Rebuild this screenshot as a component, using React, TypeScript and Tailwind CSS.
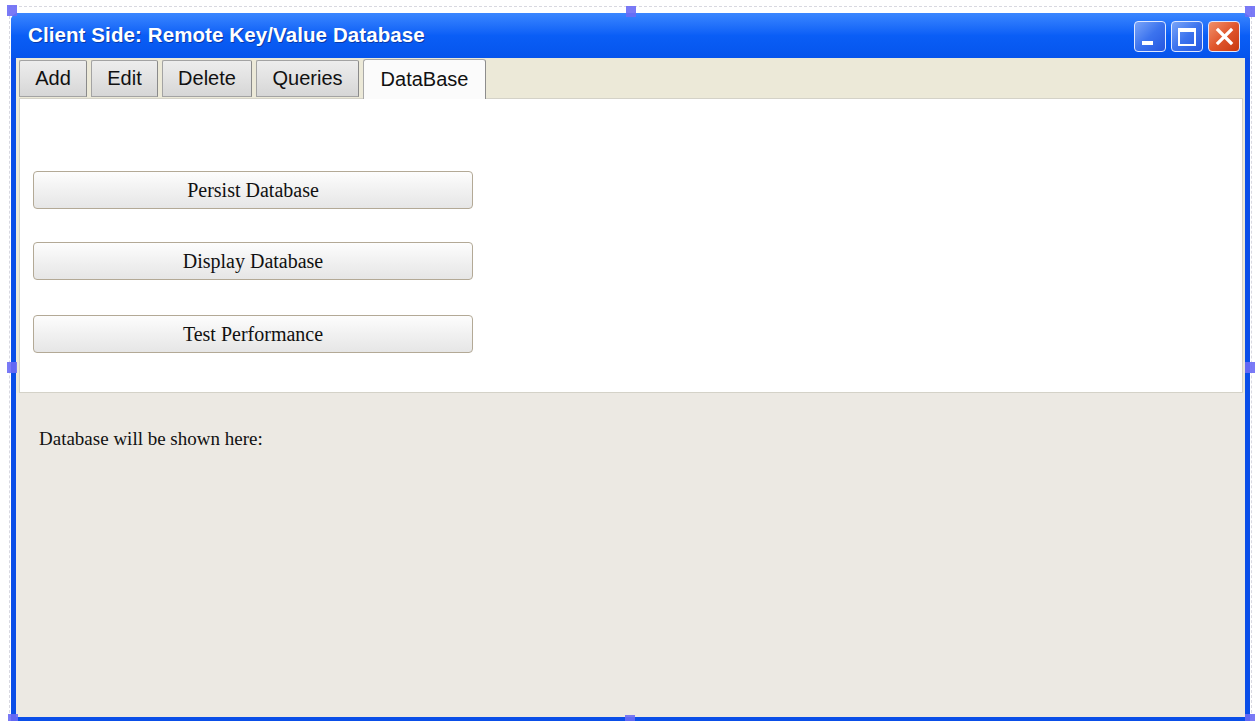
import React from "react";

const tabs = ["Add", "Edit", "Delete", "Queries", "DataBase"];
const tabWidths: Record<string, string> = {
  Add: "w-[68px]",
  Edit: "w-[67px]",
  Delete: "w-[90px]",
  Queries: "w-[103px]",
  DataBase: "w-[123px]",
};

function Handle({ className }: { className: string }) {
  return <div className={`absolute h-[11px] w-[10px] bg-[#6b6bf5] opacity-90 ${className}`} />;
}

function CaptionButton({ kind }: { kind: "min" | "max" | "close" }) {
  const bg =
    kind === "close"
      ? "bg-gradient-to-br from-[#f0906a] via-[#e0562c] to-[#c8380c]"
      : "bg-gradient-to-br from-[#7aa4f8] via-[#3c73ee] to-[#2657e0]";
  return (
    <div className={`relative h-[31px] w-[32px] rounded-[4px] border border-[#dfe8ff] ${bg}`}>
      {kind === "min" && <div className="absolute bottom-[6px] left-[7px] h-[4px] w-[11px] bg-white" />}
      {kind === "max" && (
        <div className="absolute left-[6px] top-[6px] h-[18px] w-[18px] border-2 border-t-[4px] border-white" />
      )}
      {kind === "close" && (
        <svg className="absolute left-[6px] top-[5px]" width="19" height="19" viewBox="0 0 19 19">
          <path d="M3 3 L16 16 M16 3 L3 16" stroke="white" strokeWidth="3.2" strokeLinecap="square" />
        </svg>
      )}
    </div>
  );
}

function ActionButton({ label, className }: { label: string; className: string }) {
  return (
    <button
      className={`flex h-[38px] w-[440px] items-center justify-center rounded-[4px] border border-[#b3a996] bg-gradient-to-b from-[#fdfdfd] via-[#f1f1f1] to-[#e6e6e6] text-[20px] text-[#111] ${className}`}
      style={{ fontFamily: '"Liberation Serif", "Times New Roman", serif' }}
    >
      {label}
    </button>
  );
}

export default function App() {
  return (
    <div className="relative h-[721px] w-[1260px] overflow-hidden bg-white">
      {/* designer selection outline */}
      <div className="absolute left-[9px] top-[6px] h-[712px] w-[1243px] border border-dashed border-[#d8d8e0]" />

      <div className="relative ml-[11px] pt-[13px]">
        <div className="flex h-[708px] w-[1239px] flex-col rounded-t-[8px] bg-[#0a4ee8]">
          {/* title bar */}
          <div className="flex h-[45px] items-center justify-between rounded-t-[8px] bg-gradient-to-b from-[#3a86ff] via-[#0a5ef6] to-[#0654ec] pl-[17px] pr-[10px]">
            <span
              className="text-[20.5px] font-bold tracking-[0.1px] text-white [text-shadow:1px_1px_0_#0a3aa8]"
              style={{ fontFamily: '"Liberation Sans", Arial, sans-serif' }}
            >
              Client Side: Remote Key/Value Database
            </span>
            <div className="flex gap-[5px] pt-[1px]">
              <CaptionButton kind="min" />
              <CaptionButton kind="max" />
              <CaptionButton kind="close" />
            </div>
          </div>

          {/* client area */}
          <div className="mx-[5px] flex flex-1 flex-col bg-[#ece9d8]">
            <div
              className="flex h-[40px] items-end gap-[4px] pl-[3px]"
              style={{ fontFamily: '"Liberation Sans", Arial, sans-serif' }}
            >
              {tabs.map((t) =>
                t === "DataBase" ? (
                  <div
                    key={t}
                    className={`relative z-10 -mb-px flex h-[40px] items-center justify-center rounded-t-[3px] border border-b-0 border-[#a9a9a9] border-r-[#8d8d8d] bg-[#fbfbfb] pb-[2px] text-[20px] text-[#111] ${tabWidths[t]}`}
                  >
                    {t}
                  </div>
                ) : (
                  <div
                    key={t}
                    className={`mb-px flex h-[37px] items-center justify-center rounded-t-[2px] border border-[#a3a3a3] border-r-[#8a8a8a] bg-gradient-to-b from-[#ededed] via-[#e2e2e2] to-[#d6d6d6] pb-[2px] text-[20px] text-[#111] ${tabWidths[t]}`}
                  >
                    {t}
                  </div>
                )
              )}
            </div>

            <div className="ml-[3px] mr-[2px] flex h-[295px] flex-col border border-[#d4d2c8] bg-white pl-[13px]">
              <ActionButton label="Persist Database" className="mt-[72px]" />
              <ActionButton label="Display Database" className="mt-[33px]" />
              <ActionButton label="Test Performance" className="mt-[35px]" />
            </div>

            <div className="flex-1 bg-[#ece9e3] pl-[23px] pt-[32px]">
              <p
                className="text-[19px] text-[#111]"
                style={{ fontFamily: '"Liberation Serif", "Times New Roman", serif' }}
              >
                Database will be shown here:
              </p>
            </div>
          </div>
          <div className="h-[4px]" />
        </div>
      </div>

      {/* resize handles */}
      <Handle className="left-[7px] top-[5px]" />
      <Handle className="left-[626px] top-[6px]" />
      <Handle className="left-[1245px] top-[6px]" />
      <Handle className="left-[7px] top-[362px]" />
      <Handle className="left-[1245px] top-[362px]" />
      <Handle className="left-[8px] top-[714px]" />
      <Handle className="left-[625px] top-[715px]" />
      <Handle className="left-[1245px] top-[714px]" />
    </div>
  );
}
